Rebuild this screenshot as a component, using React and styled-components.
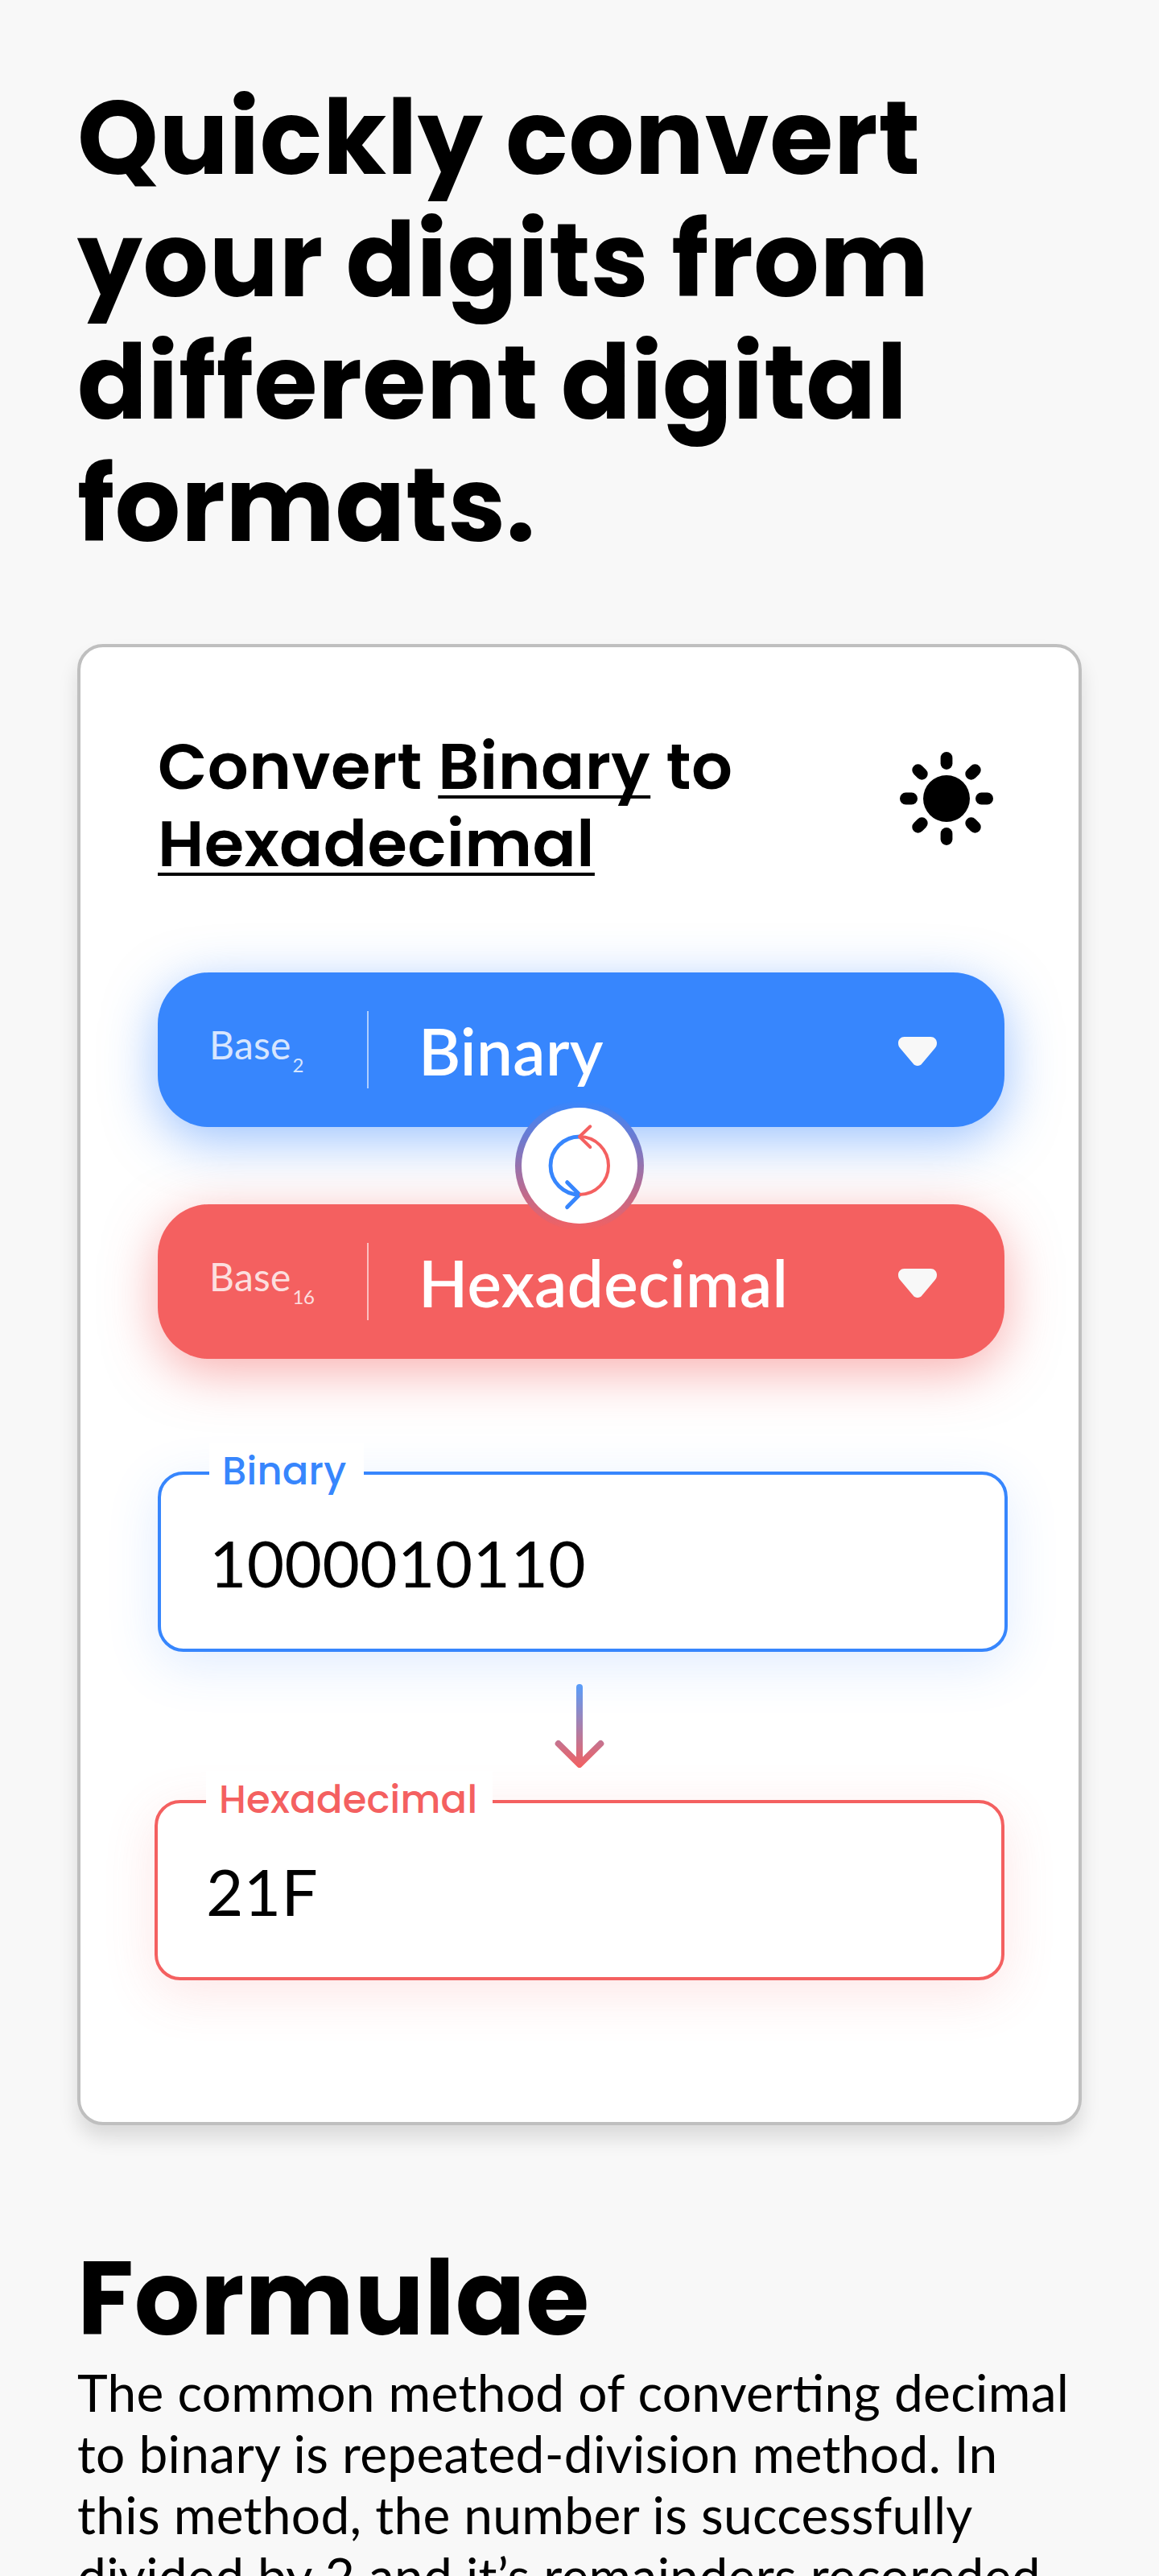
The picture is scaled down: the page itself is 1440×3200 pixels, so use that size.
import React from "react";
import styled, { createGlobalStyle } from "styled-components";

const BLUE = "#3786fd";
const RED = "#f46060";
const DISPLAY = `Poppins, Inter, "Open Sans", sans-serif`;
const BODY = `Lato, "Noto Sans", sans-serif`;

const GlobalStyle = createGlobalStyle`
  *, *::before, *::after { box-sizing: border-box; }
  html, body { margin: 0; padding: 0; background: #f8f8f8; }
`;

const Page = styled.main`
  height: 3200px;
  overflow: hidden;
  padding: 96px;
  background: #f8f8f8;
  color: #000;
  font-family: ${BODY};
`;

const Headline = styled.h1`
  margin: 0;
  font: 700 128px/152px ${DISPLAY};
  letter-spacing: 0.005em;
`;

const Card = styled.section`
  height: 1840px;
  margin-top: 96px;
  padding: 100px 96px 96px;
  border: 4px solid #bfbfbf;
  border-radius: 32px;
  background: #fff;
  box-shadow: 0 16px 24px rgba(0, 0, 0, 0.12);
`;

const CardHeader = styled.header`
  display: flex;
  align-items: flex-start;
  justify-content: space-between;
  height: 304px;
`;

const CardTitle = styled.h2`
  width: 800px;
  margin: 0;
  font: 600 80px/96px ${DISPLAY};
  letter-spacing: 0.005em;
`;

const Term = styled.span`
  text-decoration: underline;
  text-decoration-thickness: 4px;
  text-underline-offset: 8px;
  text-decoration-skip-ink: none;
`;

const ThemeButton = styled.button`
  display: flex;
  margin: 30px 10px 0 0;
  padding: 0;
  border: 0;
  background: none;
  color: #000;
`;

const Selectors = styled.div`
  position: relative;
  display: flex;
  flex-direction: column;
  gap: 96px;
`;

const BaseSelect = styled.div`
  display: flex;
  align-items: center;
  width: 1052px;
  height: 192px;
  padding: 48px 84px 48px 64px;
  border-radius: 64px;
  background: ${(p) => p.$color};
  box-shadow: 0 16px 64px ${(p) => p.$color}80;
  color: #fff;
`;

const BaseTag = styled.div`
  display: flex;
  align-items: flex-start;
  gap: 2px;
  align-self: flex-start;
  width: 196px;
  margin-top: 13px;
  font-size: 48px;
  line-height: 57px;
  letter-spacing: 0.005em;
  opacity: 0.8;
`;

const Radix = styled.span`
  margin-top: 39px;
  font-size: 24px;
  line-height: 29px;
  letter-spacing: -0.02em;
`;

const Divider = styled.span`
  width: 2px;
  height: 96px;
  background: rgba(255, 255, 255, 0.6);
`;

const SelectName = styled.span`
  flex: 1;
  padding: 2px 0 0 62px;
  font-size: 80px;
  font-weight: 600;
  line-height: 96px;
  letter-spacing: 0.005em;
`;

const CaretIcon = styled.svg`
  flex: none;
  width: 48px;
  height: 36px;
  margin-top: 4px;
`;

const SwapButton = styled.button`
  position: absolute;
  top: 160px;
  left: calc(50% - 80px);
  display: flex;
  align-items: center;
  justify-content: center;
  width: 160px;
  height: 160px;
  padding: 0;
  border: 8px solid transparent;
  border-radius: 50%;
  background: linear-gradient(#fff, #fff) padding-box,
    linear-gradient(${BLUE}, ${RED}) border-box;
`;

const Fields = styled.div`
  display: flex;
  flex-direction: column;
  margin-top: 140px;
`;

const Field = styled.label`
  position: relative;
  display: flex;
  align-items: center;
  width: 1056px;
  height: 224px;
  margin-left: ${(p) => p.$shift || 0}px;
  padding: 2px 60px 0;
  border: 4px solid ${(p) => p.$color};
  border-radius: 32px;
  background: #fff;
  box-shadow: 0 16px 64px ${(p) => p.$color}28;
  font-size: 80px;
  line-height: 96px;
  letter-spacing: 0.005em;
`;

const FieldLabel = styled.span`
  position: absolute;
  top: -40px;
  left: 60px;
  width: ${(p) => p.$width}px;
  padding-left: 16px;
  background: #fff;
  color: ${(p) => p.$color};
  font: 500 48px/72px ${DISPLAY};
  letter-spacing: 0.005em;
`;

const DownArrow = styled.svg`
  display: block;
  margin: 40px auto;
`;

const Formulae = styled.section`
  margin-top: 140px;
`;

const SectionTitle = styled.h2`
  margin: 0;
  font: 700 128px/152px ${DISPLAY};
  letter-spacing: 0.005em;
`;

const Paragraph = styled.p`
  margin: 2px 0 0;
  font-size: 64px;
  line-height: 76px;
  letter-spacing: 0.005em;
  font-feature-settings: "liga" 1;
`;

const Sun = () => (
  <svg width="116" height="116" viewBox="-58 -58 116 116" fill="currentColor">
    <circle r="29" />
    {[0, 90, 180, 270].map((a) => (
      <rect key={a} x="-7.4" y="-58" width="14.8" height="22" rx="7.4" transform={`rotate(${a})`} />
    ))}
    {[45, 135, 225, 315].map((a) => (
      <rect key={a} x="-7.3" y="-57.4" width="14.6" height="21.4" rx="7.3" transform={`rotate(${a})`} />
    ))}
  </svg>
);

const Caret = () => (
  <CaretIcon viewBox="0 0 48 36" fill="#f8f8f8">
    <path d="M7.5 0H40.5C44.6 0 48 3.4 48 7.5C48 10.3 47.3 12.2 45.5 14.2L29.5 33.2C27 36.9 21 36.9 18.5 33.2L2.5 14.2C.7 12.2 0 10.3 0 7.5C0 3.4 3.4 0 7.5 0Z" />
  </CaretIcon>
);

const SwapGlyph = styled.svg`
  flex: none;
  width: 96px;
  height: 120px;
`;

const SwapIcon = () => (
  <SwapGlyph viewBox="-48 -60 96 120" fill="none" strokeLinecap="round" strokeLinejoin="round">
    <path d="M0 -36A36 36 0 0 0 0 36" stroke={BLUE} strokeWidth="4.8" strokeLinecap="butt" />
    <path d="M-15.3 20.7L0 36L-15.3 51.6" stroke={BLUE} strokeWidth="5" />
    <path d="M0 -36A36 36 0 0 1 0 36" stroke={RED} strokeWidth="4" strokeLinecap="butt" />
    <path d="M13.3 -48.7L0 -36L13.3 -23" stroke={RED} strokeWidth="4" />
  </SwapGlyph>
);

function Select({ color, radix, name }) {
  return (
    <BaseSelect $color={color}>
      <BaseTag>
        Base<Radix>{radix}</Radix>
      </BaseTag>
      <Divider />
      <SelectName>{name}</SelectName>
      <Caret />
    </BaseSelect>
  );
}

export default function App() {
  return (
    <Page>
      <GlobalStyle />
      <Headline>Quickly convert your digits from different digital formats.</Headline>
      <Card>
        <CardHeader>
          <CardTitle>
            Convert <Term>Binary</Term> to <Term>Hexadecimal</Term>
          </CardTitle>
          <ThemeButton aria-label="Theme">
            <Sun />
          </ThemeButton>
        </CardHeader>
        <Selectors>
          <Select color={BLUE} radix="2" name="Binary" />
          <Select color={RED} radix="16" name="Hexadecimal" />
          <SwapButton aria-label="Swap">
            <SwapIcon />
          </SwapButton>
        </Selectors>
        <Fields>
          <Field $color={BLUE}>
            <FieldLabel $color={BLUE} $width={192}>Binary</FieldLabel>
            1000010110
          </Field>
          <DownArrow width="64" height="104" viewBox="0 0 64 104" fill="none">
            <defs>
              <linearGradient id="fade" gradientUnits="userSpaceOnUse" x1="32" y1="0" x2="32" y2="104">
                <stop stopColor="#5a9ffb" />
                <stop offset="1" stopColor={RED} />
              </linearGradient>
            </defs>
            <path
              d="M32 4V98M5.7 74L32 100L58.3 74"
              stroke="url(#fade)"
              strokeWidth="8"
              strokeLinecap="round"
              strokeLinejoin="round"
            />
          </DownArrow>
          <Field $color={RED} $shift={-4}>
            <FieldLabel $color={RED} $width={356}>Hexadecimal</FieldLabel>
            21F
          </Field>
        </Fields>
      </Card>
      <Formulae>
        <SectionTitle>Formulae</SectionTitle>
        <Paragraph>
          The common method of converting decimal to binary is repeated-division method. In this
          method, the number is successfully divided by 2 and it’s remainders recoreded
        </Paragraph>
      </Formulae>
    </Page>
  );
}
